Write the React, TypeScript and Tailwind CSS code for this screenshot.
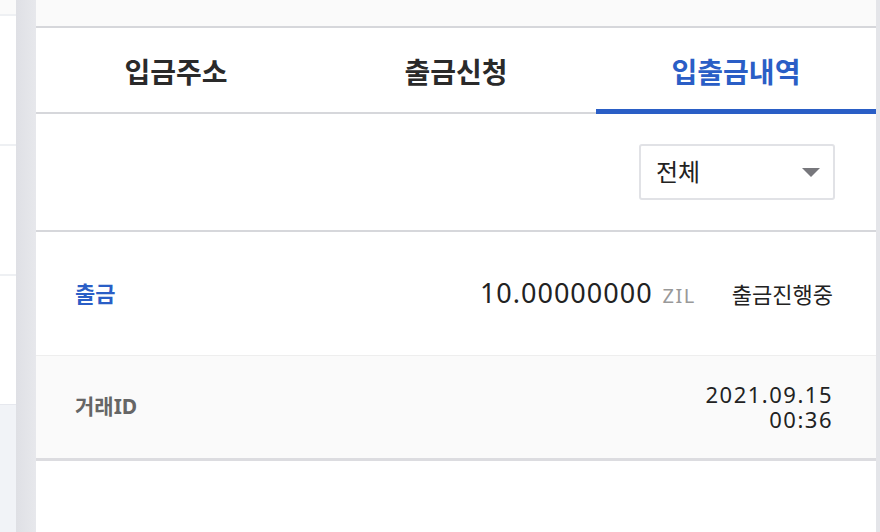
import React from "react";

export default function App() {
  const font = { fontFamily: '"Noto Sans", "Noto Sans CJK KR", sans-serif' };
  return (
    <div className="w-[880px] h-[532px] flex bg-white overflow-hidden" style={font}>
      {/* left sliver */}
      <div className="w-[16px] flex flex-col shrink-0">
        <div className="h-[16px] bg-[#fafafa] border-b-2 border-[#eef0f3]" />
        <div className="h-[130px] border-b-2 border-[#eef0f3]" />
        <div className="h-[130px] border-b-2 border-[#eef0f3]" />
        <div className="h-[128px]" />
        <div className="flex-1 bg-[#f1f3f7] border-t border-[#e6e8ee]" />
      </div>
      <div className="w-[20px] shrink-0 bg-gradient-to-r from-[#dfe0e5] to-[#e7e8ec]" />
      {/* main panel */}
      <div className="w-[840px] shrink-0 flex flex-col">
        <div className="h-[28px] bg-[#fafafa] border-b-2 border-[#d6d7db]" />
        <div className="flex h-[86px] border-b-2 border-[#d6d7db]">
          <div className="w-[280px] flex items-center justify-center pt-[4px] text-[28px] font-bold text-[#2a2a2a]">입금주소</div>
          <div className="w-[280px] flex items-center justify-center pt-[4px] text-[28px] font-bold text-[#2a2a2a]">출금신청</div>
          <div className="w-[280px] relative flex items-center justify-center pt-[4px] text-[28px] font-bold text-[#2a5ec6]">
            입출금내역
            <div className="absolute left-0 right-0 bottom-[-2px] h-[5px] bg-[#2a5ec6]" />
          </div>
        </div>
        <div className="h-[118px] flex items-center justify-end pr-[41px] border-b-2 border-[#d6d7db]">
          <div className="w-[196px] h-[56px] border-2 border-[#e1e2e6] rounded-[3px] flex items-center justify-between pl-[15px] pr-[13px]">
            <span className="text-[24px] text-[#222]">전체</span>
            <svg width="18" height="9" viewBox="0 0 18 9"><path d="M0 0 L18 0 L9 9 Z" fill="#77777c" /></svg>
          </div>
        </div>
        <div className="h-[124px] flex items-center pl-[39px] pr-[43px] border-b border-[#eeeeee]">
          <span className="text-[22px] font-bold text-[#2a5ec6]">출금</span>
          <div className="ml-auto flex items-baseline">
            <span className="text-[27px] text-[#222] tracking-[1px]">10.00000000</span>
            <span className="text-[20px] text-[#999] ml-[10px] tracking-[1.5px]">ZIL</span>
            <span className="text-[22px] text-[#222] ml-[36px]">출금진행중</span>
          </div>
        </div>
        <div className="h-[105px] bg-[#fafafa] flex items-center pl-[39px] pr-[43px] border-b-[3px] border-[#dcdce0]">
          <span className="text-[21px] font-bold text-[#666]">거래ID</span>
          <div className="ml-auto flex flex-col items-end text-[22px] leading-[25px] text-[#222] tracking-[1.5px]">
            <span>2021.09.15</span>
            <span>00:36</span>
          </div>
        </div>
        <div className="flex-1 bg-white" />
      </div>
      <div className="w-[4px] shrink-0 bg-[#e4e5e9]" />
    </div>
  );
}
